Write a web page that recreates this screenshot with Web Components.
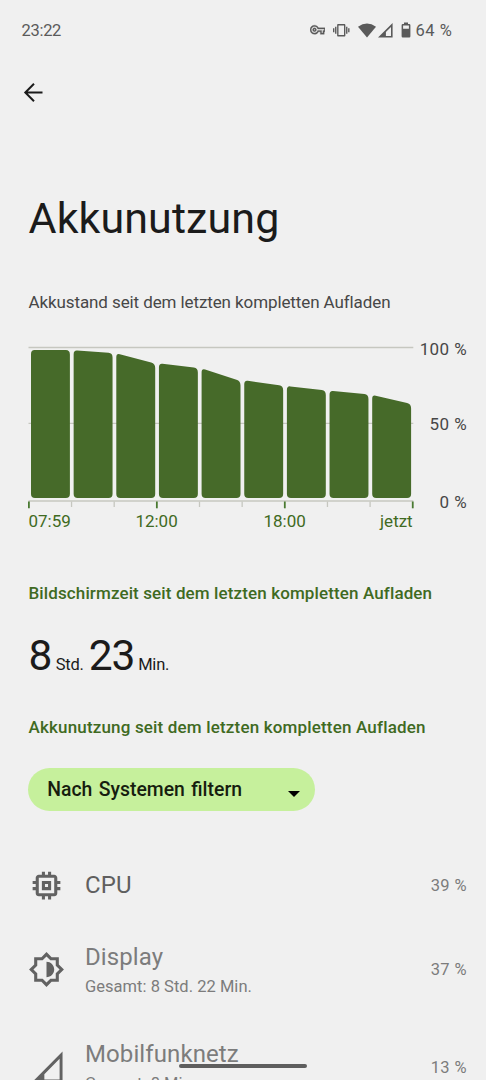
<!DOCTYPE html>
<html lang="de">
<head>
<meta charset="utf-8">
<title>Akkunutzung</title>
<style>
    html, body { margin: 0; height: 100%; overflow: hidden; background: #f0f0f0; }
    body { font-family: Roboto, "Liberation Sans", sans-serif; color: #1b1b1b; }
</style>
</head>
<body>
<battery-screen>
    <status-bar slot="status" time="23:22" level="64 %"></status-bar>
    <app-bar>Akkunutzung</app-bar>
    <battery-chart>Akkustand seit dem letzten kompletten Aufladen</battery-chart>
    <screen-time hours="8" minutes="23">Bildschirmzeit seit dem letzten kompletten Aufladen</screen-time>
    <section-title>Akkunutzung seit dem letzten kompletten Aufladen</section-title>
    <filter-spinner>Nach Systemen filtern</filter-spinner>
    <usage-row icon="cpu" percent="39 %" class="single">CPU</usage-row>
    <usage-row icon="display" percent="37 %" summary="Gesamt: 8 Std. 22 Min.">Display</usage-row>
    <usage-row icon="signal" percent="13 %" summary="Gesamt: 8 Min.">Mobilfunknetz</usage-row>
</battery-screen>

<script>
(function() {
    "use strict";

    const icons = {
        cpu: `<path d="M15 9H9v6h6V9zm-2 4h-2v-2h2v2zm8-2V9h-2V7c0-1.1-.9-2-2-2h-2V3h-2v2h-2V3H9v2H7c-1.1 0-2 .9-2 2v2H3v2h2v2H3v2h2v2c0 1.1.9 2 2 2h2v2h2v-2h2v2h2v-2h2c1.1 0 2-.9 2-2v-2h2v-2h-2v-2h2zm-4 6H7V7h10v10z"/>`,
        display: `<path d="M20 8.69V4h-4.69L12 .69 8.69 4H4v4.69L.69 12 4 15.31V20h4.69L12 23.31 15.31 20H20v-4.69L23.31 12 20 8.69zm-2 5.79V18h-3.52L12 20.48 9.52 18H6v-3.52L3.52 12 6 9.52V6h3.52L12 3.52 14.48 6H18v3.52L20.48 12 18 14.48zM12 7v10c2.76 0 5-2.24 5-5s-2.24-5-5-5z"/>`,
        signal: `<path fill-rule="evenodd" d="M2.5 21.7 22.4 1.7v20zM10.6 19.8h9.9V6.4l-9.9 10z"/>`
    };

    // Attaches an open shadow root with the given markup
    function render(el, html) {
        el.attachShadow({mode: 'open'}).innerHTML = html;
    }

    class BatteryScreen extends HTMLElement {
        constructor() {
            super();
            render(this, `
<style>
    :host { display: block; position: relative; height: 1080px; overflow: hidden; background: #f0f0f0; }
    main { display: flex; flex-direction: column; padding: 0 19px 0 28.5px; }
    .handle { position: absolute; left: 179px; bottom: 12px; width: 128px; height: 4.5px; border-radius: 3px; background: #5e5e5e; }
</style>
<slot name="status"></slot>
<main><slot></slot></main>
<div class="handle"></div>`);
        }
    }

    class StatusBar extends HTMLElement {
        connectedCallback() {
            render(this, `
<style>
    :host { display: flex; align-items: center; height: 60px; padding: 0 33.5px 0 21.5px; color: #5a5a5a; font-size: 16.5px; }
    .time { flex: 1; letter-spacing: -.3px; }
    .level { letter-spacing: .6px; }
    svg { display: block; fill: currentColor; }
    .key { margin-right: 8px; stroke: currentColor; stroke-width: .5; }
    .vibrate { margin-right: 8.5px; }
    .wifi { margin-right: 2px; }
    .cell { margin-right: 7.5px; }
    .battery { margin-right: 4.5px; }
</style>
<span class="time">${this.getAttribute('time')}</span>
<svg class="key" width="15.5" height="15.5" viewBox="0 0 24 24"><path d="M22 19h-6v-4h-2.68c-1.14 2.42-3.6 4-6.32 4-3.86 0-7-3.14-7-7s3.14-7 7-7c2.72 0 5.17 1.58 6.32 4H24v6h-2v4zm-4-2h2v-4h2v-2H11.94l-.23-.67C11.01 8.34 9.11 7 7 7c-2.76 0-5 2.24-5 5s2.24 5 5 5c2.11 0 4.01-1.34 4.71-3.33l.23-.67H18v4zM7 15c-1.65 0-3-1.35-3-3s1.35-3 3-3 3 1.35 3 3-1.35 3-3 3zm0-4c-.55 0-1 .45-1 1s.45 1 1 1 1-.45 1-1-.45-1-1-1z"/></svg>
<svg class="vibrate" width="16.5" height="16.5" viewBox="0 0 24 24"><path d="M0 15h2V9H0v6zm3 2h2V7H3v10zm19-8v6h2V9h-2zm-3 8h2V7h-2v10zM16.5 3h-9C6.67 3 6 3.67 6 4.5v15c0 .83.67 1.5 1.5 1.5h9c.83 0 1.5-.67 1.5-1.5v-15c0-.83-.67-1.5-1.5-1.5zM16 19H8V5h8v14z"/></svg>
<svg class="wifi" width="18" height="15" viewBox="0 0 18 15"><path d="M0 3.8Q9-2.8 18 3.8L9 14.4z"/></svg>
<svg class="cell" width="15" height="15" viewBox="0 0 15 15"><path fill-rule="evenodd" d="M0 14.6 14.6 0v14.6zM7.9 13.1h5.1V3.9L7.9 9z"/></svg>
<svg class="battery" width="10" height="16" viewBox="0 0 10 16"><path fill-rule="evenodd" d="M3 .5h4V2h1.2q1.2 0 1.2 1.2v11q0 1.2-1.2 1.2H1.8Q.6 15.4.6 14.2v-11Q.6 2 1.8 2H3zM2.1 3.5v3.2h5.800V3.5z"/></svg>
<span class="level">${this.getAttribute('level')}</span>`);
        }
    }

    class AppBar extends HTMLElement {
        constructor() {
            super();
            render(this, `
<style>
    :host { display: block; height: 228px; }
    svg { display: block; margin: 20px 0 0 -7.5px; fill: none; stroke: #1b1b1b; stroke-width: 2; }
    h1 { margin: 86px 0 0; font-size: 43px; font-weight: 400; line-height: 56px; letter-spacing: .1px; }
</style>
<svg width="24" height="24" viewBox="0 0 24 24"><path d="M21.5 12.5H4.5M13 3.8 4.3 12.5l8.7 8.7"/></svg>
<h1><slot></slot></h1>`);
        }
    }

    class BatteryChart extends HTMLElement {
        constructor() {
            super();
            // Top left and top right of each bar, on the 170px high plot
            const levels = [
                [9, 9], [9.3, 12], [12.3, 22.5], [22.3, 27], [27.3, 40],
                [39.3, 44.8], [45, 49.5], [49.7, 53.5], [53.8, 63]
            ];
            const step = 42.65;
            const bars = levels.map(([a, b], i) => {
                const l = 3 + i * step;
                const r = l + 38.9;
                const slope = (b - a) / 38.9;
                return `<path d="M${l} ${a + 4}Q${l} ${a} ${l + 3.5} ${a + slope * 3.5}L${r - 4} ${b - slope * 4}Q${r} ${b} ${r} ${b + 4.5}V153q0 4-4 4H${l + 4}q-4 0-4-4z"/>`;
            }).join('');
            const ticks = [];
            for (let i = 0; i <= 9; i++) {
                const major = i % 3 === 0;
                ticks.push(`<path d="M${.9 + i * step} 160.5v${major ? 6.8 : 5.5}" stroke="${major ? '#4a7a32' : '#c6c7c0'}" stroke-width="${major ? 1.8 : 1.3}"/>`);
            }
            render(this, `
<style>
    :host { display: block; height: 292px; }
    .caption { padding-top: 3px; font-size: 17px; line-height: 22px; color: #474747; letter-spacing: -.1px; }
    .plot { display: flex; justify-content: space-between; margin: 28px 0 0 -.5px; height: 170px; }
    svg { display: block; overflow: visible; }
    .levels { display: grid; grid-template-rows: 75px 78px 20px; margin-top: -2px; text-align: right; font-size: 17px; line-height: 20px; color: #474747; letter-spacing: .4px; }
    .hours { display: grid; grid-template-columns: repeat(9, 42.7px); font-size: 17px; line-height: 20px; color: #3f6a22; }
    .hours span { grid-column: span 2; }
    .hours span:nth-child(2) { grid-column: 3 / 5; text-align: center; }
    .hours span:nth-child(3) { grid-column: 6 / 8; text-align: center; }
    .hours span:nth-child(4) { grid-column: 8 / 10; text-align: right; }
</style>
<div class="caption"><slot></slot></div>
<div class="plot">
    <svg width="386" height="170" viewBox="0 0 386 170">
        <path d="M.5 6.5H385.3M.5 82.3H385.3M.5 160H385.3" stroke="#c6c7c0" stroke-width="1.3"/>
        ${ticks.join('')}
        <g fill="#466a29">${bars}</g>
    </svg>
    <div class="levels"><span>100 %</span><span>50 %</span><span>0 %</span></div>
</div>
<div class="hours"><span>07:59</span><span>12:00</span><span>18:00</span><span>jetzt</span></div>`);
        }
    }

    class SectionTitle extends HTMLElement {
        constructor() {
            super();
            render(this, `
<style>
    :host { display: block; height: 22px; font-size: 17px; font-weight: 500; line-height: 22px; letter-spacing: .17px; white-space: nowrap; color: #3f6a22; }
</style>
<slot></slot>`);
        }
    }

    class ScreenTime extends HTMLElement {
        connectedCallback() {
            render(this, `
<style>
    :host { display: block; height: 136px; padding-top: 2px; box-sizing: border-box; }
    section-title { letter-spacing: .12px; }
    .value { display: flex; align-items: baseline; margin-top: 24px; font-size: 16.5px; line-height: 56px; }
    b { font-size: 42.5px; font-weight: 400; letter-spacing: -1.2px; }
    .unit { margin: 0 5px 0 4.5px; letter-spacing: -.2px; }
    .unit:last-child { margin-left: 4px; }
</style>
<section-title><slot></slot></section-title>
<div class="value"><b>${this.getAttribute('hours')}</b><span class="unit">Std.</span><b>${this.getAttribute('minutes')}</b><span class="unit">Min.</span></div>`);
        }
    }

    class FilterSpinner extends HTMLElement {
        constructor() {
            super();
            render(this, `
<style>
    :host { display: flex; align-items: center; justify-content: space-between; box-sizing: border-box; width: 287px; height: 43px; margin: 30px 0 38px -.3px; padding: 0 14px 0 19px; border-radius: 22px; background: #c6f09c; font-size: 19.4px; font-weight: 500; word-spacing: 1.6px; color: #161d0f; }
    svg { display: block; margin-top: 8px; }
</style>
<span><slot></slot></span>
<svg width="14" height="8" viewBox="0 0 14 8"><path d="M1 1h12L7 7z" fill="#000"/></svg>`);
        }
    }

    class UsageRow extends HTMLElement {
        connectedCallback() {
            const summary = this.getAttribute('summary');
            render(this, `
<style>
    :host { display: flex; align-items: center; flex: none; height: 97.5px; color: #7c7c7c; }
    :host(.single) { height: 72px; }
    :host(.single) .name { color: #5f5f5f; }
    svg { display: block; width: 37px; height: 37px; margin: 0 20px 0 -.5px; fill: #626262; }
    .text { flex: 1; }
    .name { font-size: 24px; line-height: 32px; letter-spacing: .1px; }
    .summary { margin-top: 2px; font-size: 16.5px; line-height: 24px; letter-spacing: .03px; }
    .percent { font-size: 16.5px; letter-spacing: .4px; }
</style>
<svg viewBox="0 0 24 24">${icons[this.getAttribute('icon')]}</svg>
<div class="text">
    <div class="name"><slot></slot></div>
    ${summary ? `<div class="summary">${summary}</div>` : ''}
</div>
<span class="percent">${this.getAttribute('percent')}</span>`);
        }
    }

    window.customElements.define('battery-screen', BatteryScreen);
    window.customElements.define('status-bar', StatusBar);
    window.customElements.define('app-bar', AppBar);
    window.customElements.define('battery-chart', BatteryChart);
    window.customElements.define('section-title', SectionTitle);
    window.customElements.define('screen-time', ScreenTime);
    window.customElements.define('filter-spinner', FilterSpinner);
    window.customElements.define('usage-row', UsageRow);

})();
</script>
</body>
</html>
